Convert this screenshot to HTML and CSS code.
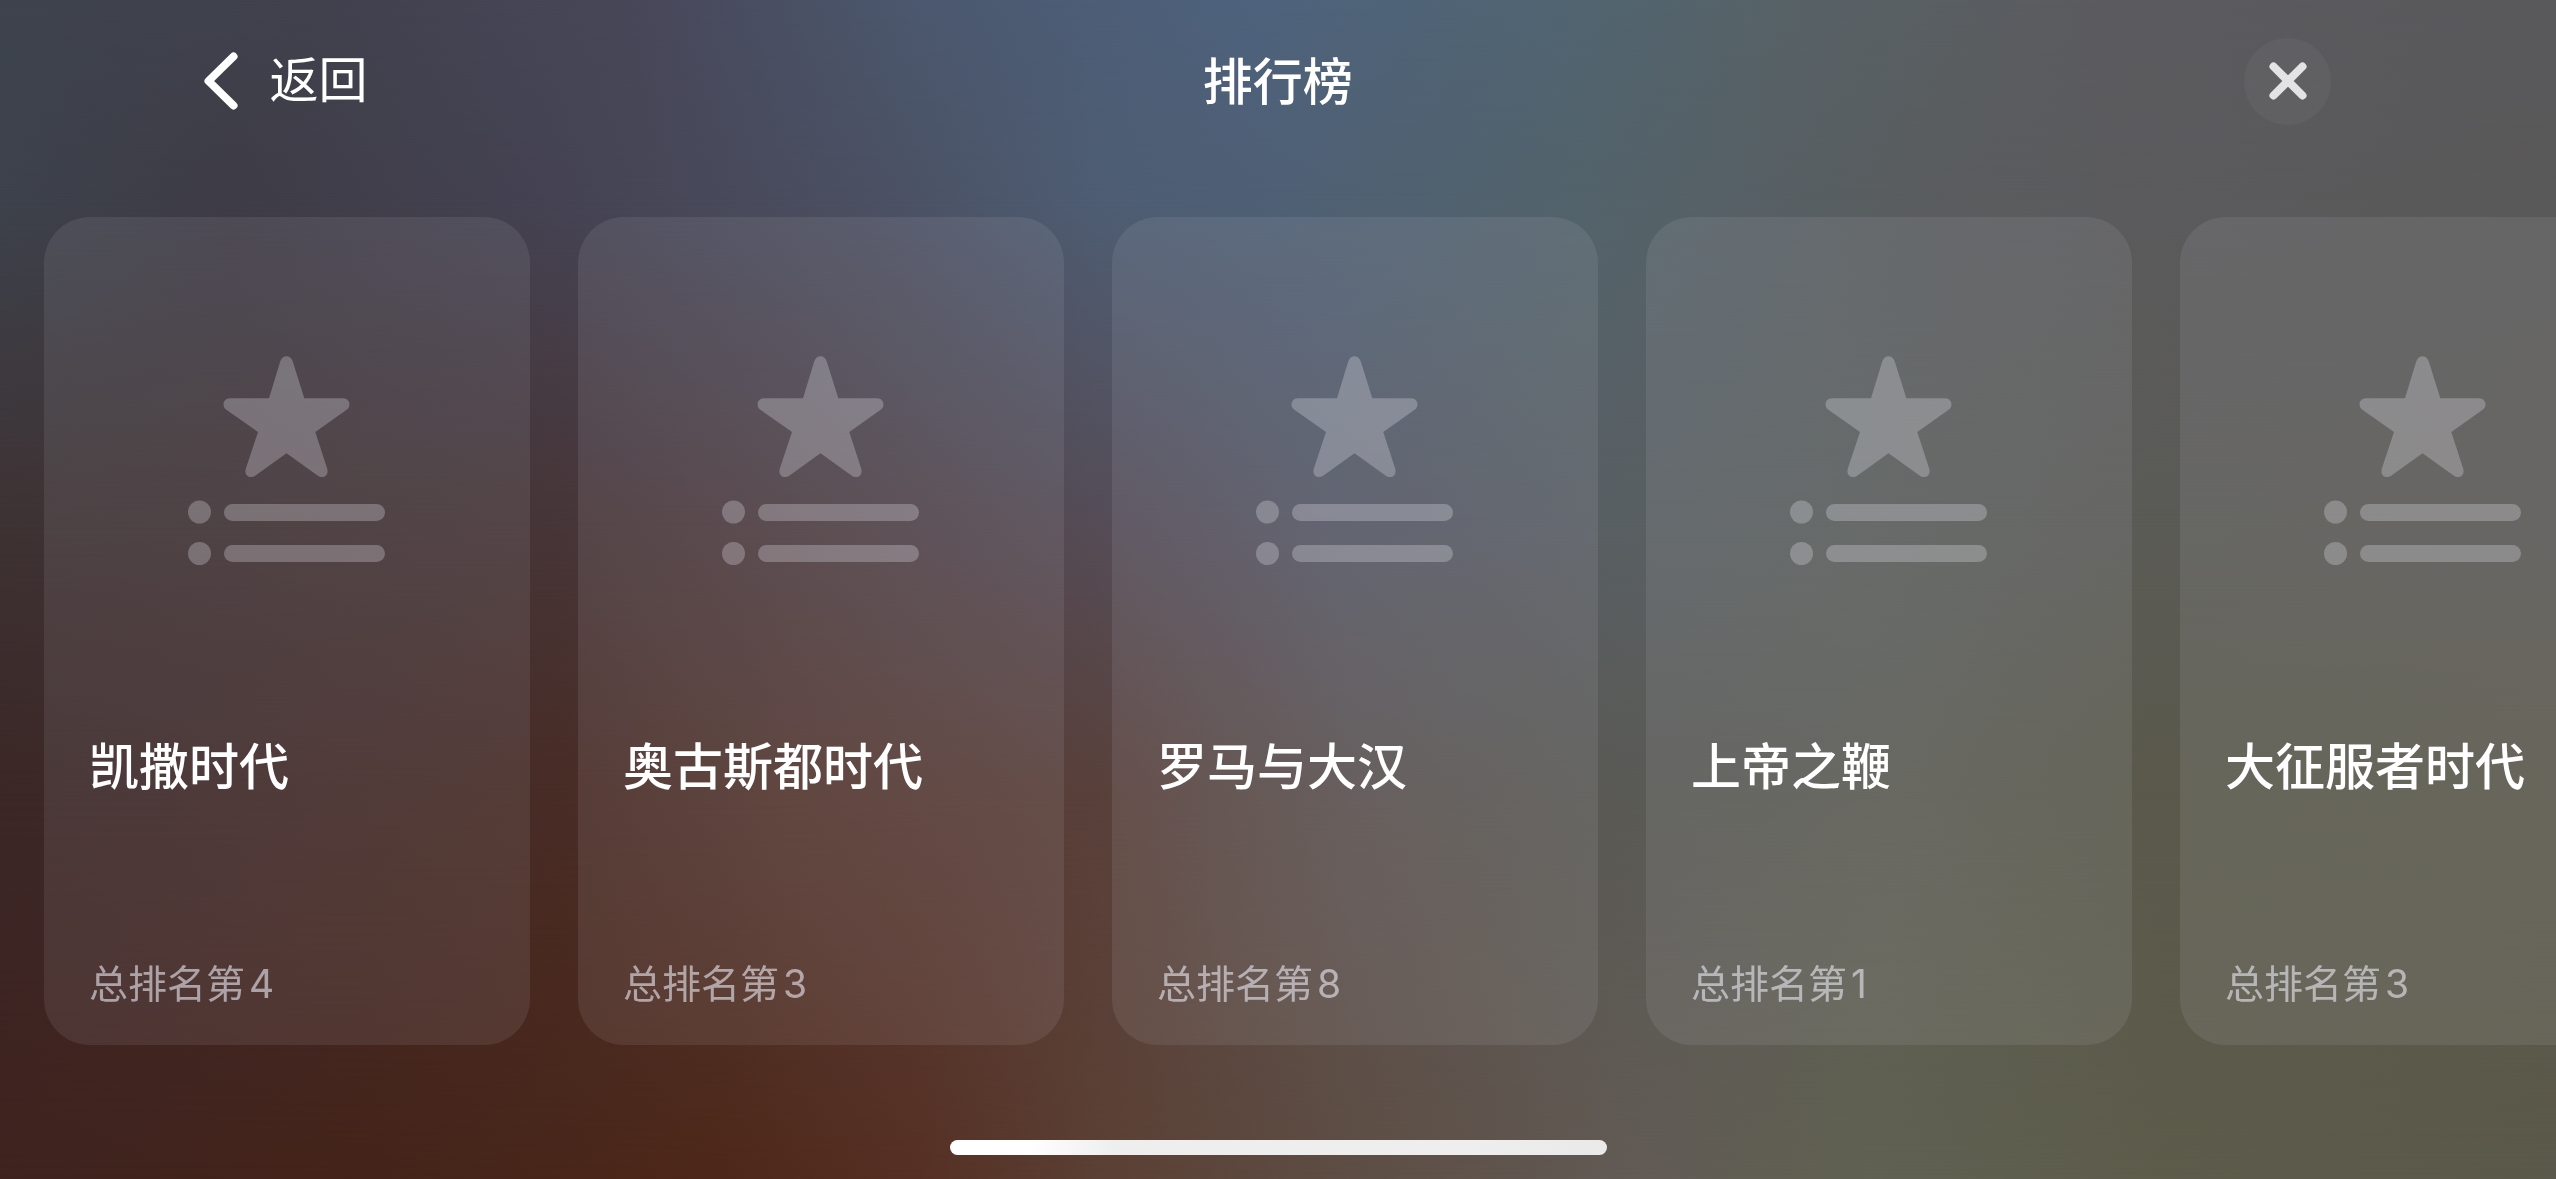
FILE: index.html
```html
<!DOCTYPE html>
<html lang="zh-CN">
<head>
<meta charset="utf-8">
<meta name="viewport" content="width=device-width, initial-scale=1">
<title>排行榜</title>
<link rel="stylesheet" href="styles.css">
</head>
<body>
<div class="backdrop" aria-hidden="true">
  <div class="band band-5"></div>
  <div class="band band-4"></div>
  <div class="band band-3"></div>
  <div class="band band-2"></div>
  <div class="band band-1"></div>
</div>
<svg class="defs" aria-hidden="true">
  <symbol id="star-list" viewBox="0 0 197 209">
    <path d="M92.300 5.300C94.300-1.600 102.700-1.600 104.700 5.300L116.300 42.300H155C161.500 42.300 163.600 49.800 159 53.500L127.300 76L139.300 113C141 119.500 135 123.500 129.500 119.500L98.500 97.300L67.500 119.500C62 123.500 56 119.500 57.700 113L70 76L38 53.500C33.400 49.800 35.500 42.300 42 42.300H81Z"/>
    <circle cx="11.500" cy="156" r="11.500"/>
    <circle cx="11.500" cy="197.500" r="11.500"/>
    <rect x="36" y="148" width="161" height="17" rx="8.500"/>
    <rect x="36" y="189" width="161" height="17" rx="8.500"/>
  </symbol>
</svg>
<header class="bar">
  <button class="back" type="button">
    <svg class="chevron" viewBox="0 0 34 58" aria-hidden="true"><path d="M29.500 4.500L4.500 29L29.500 53.500"/></svg>
    <span>返回</span>
  </button>
  <h1 class="title">排行榜</h1>
  <button class="close" type="button" aria-label="关闭">
    <svg class="cross" viewBox="0 0 38 38" aria-hidden="true"><path d="M4.500 4.500L33.500 33.500M33.500 4.500L4.500 33.500"/></svg>
  </button>
</header>
<main class="boards">
  <article class="card">
    <svg class="emblem" aria-hidden="true"><use href="#star-list"/></svg>
    <h2 class="name">凯撒时代</h2>
    <p class="rank">总排名第<span class="num">4</span></p>
  </article>
  <article class="card">
    <svg class="emblem" aria-hidden="true"><use href="#star-list"/></svg>
    <h2 class="name">奥古斯都时代</h2>
    <p class="rank">总排名第<span class="num">3</span></p>
  </article>
  <article class="card">
    <svg class="emblem" aria-hidden="true"><use href="#star-list"/></svg>
    <h2 class="name">罗马与大汉</h2>
    <p class="rank">总排名第<span class="num">8</span></p>
  </article>
  <article class="card">
    <svg class="emblem" aria-hidden="true"><use href="#star-list"/></svg>
    <h2 class="name">上帝之鞭</h2>
    <p class="rank">总排名第<span class="num">1</span></p>
  </article>
  <article class="card">
    <svg class="emblem" aria-hidden="true"><use href="#star-list"/></svg>
    <h2 class="name">大征服者时代</h2>
    <p class="rank">总排名第<span class="num">3</span></p>
  </article>
</main>
<div class="home-indicator"></div>
</body>
</html>
```
FILE: styles.css
```css
* {
  box-sizing: border-box;
}

body {
  margin: 0;
  min-height: 100vh;
  display: flex;
  flex-direction: column;
  overflow-x: hidden;
  background: #4b4a4c;
  color: #fff;
  font-family: Inter, "Noto Sans CJK SC", sans-serif;
}

/* Soft colour field: each band fades into the one below it */
.backdrop {
  position: fixed;
  inset: 0;
  z-index: -1;
}

.band {
  position: absolute;
  inset: 0;
}

.band-1 {
  background: linear-gradient(90deg, #3e434d 0%, #40414d 12%, #484759 25%, #4b586e 36%, #4e627d 49%, #506471 61%, #576266 70%, #5b5b5f 82%, #59585b 100%);
  mask-image: linear-gradient(#000 0%, transparent 17%);
}

.band-2 {
  background: linear-gradient(90deg, #3d424c 0%, #3e3c46 9%, #454353 22%, #4b5062 34%, #4e5d73 43%, #4f6075 50%, #53636b 62%, #5a5d5f 75%, #5b5a5c 86%, #5a5959 100%);
  mask-image: linear-gradient(#000 17%, transparent 45%);
}

.band-3 {
  background: linear-gradient(90deg, #3e3233 0%, #403334 9%, #473537 22%, #504044 32%, #554c56 43%, #565865 52%, #595f63 63%, #5b5f5d 72%, #5b5b56 84%, #5c5a56 100%);
  mask-image: linear-gradient(#000 45%, transparent 68%);
}

.band-4 {
  background: linear-gradient(90deg, #3b2726 0%, #402928 9%, #482c25 22%, #54372f 31%, #59403a 43%, #5c5350 53%, #5a5a55 64%, #5d5d54 74%, #5a594b 84%, #5c594c 100%);
  mask-image: linear-gradient(#000 68%, transparent 100%);
}

.band-5 {
  background: linear-gradient(90deg, #3f231f 0%, #44241a 14%, #4d281a 28%, #563024 36%, #5b4034 43%, #5e4f46 54%, #625b55 64%, #606152 73%, #5d5c4b 85%, #5b594a 100%);
}

.defs {
  position: absolute;
  width: 0;
  height: 0;
}

button {
  border: 0;
  padding: 0;
  color: inherit;
  font: inherit;
  cursor: pointer;
}

.bar {
  display: grid;
  grid-template-columns: 1fr auto 1fr;
  align-items: center;
  height: 162px;
  padding: 0 8.8% 0 8%;
}

.back {
  justify-self: start;
  display: flex;
  align-items: center;
  gap: 31px;
  background: none;
  font-size: 49px;
  line-height: 60px;
}

.chevron {
  width: 34px;
  height: 58px;
}

.chevron path,
.cross path {
  fill: none;
  stroke: currentColor;
  stroke-linecap: round;
  stroke-linejoin: round;
  stroke-width: 8;
}

.title {
  margin: 2px 0 0 20px;
  font-size: 50px;
  line-height: 60px;
  font-weight: 500;
}

.close {
  justify-self: end;
  display: grid;
  place-items: center;
  width: 87px;
  height: 87px;
  border-radius: 50%;
  background: rgb(255 255 255 / 4%);
  color: #e3e3e3;
}

.cross {
  width: 38px;
  height: 38px;
}

.boards {
  flex: 1;
  display: flex;
  gap: 48px;
  padding: 55px 44px 0;
  overflow: hidden;
}

.card {
  flex: 0 0 486px;
  display: flex;
  flex-direction: column;
  padding: 139px 47px 31px 45px;
  border-radius: 46px;
  background: rgb(235 235 245 / 9%);
}

.emblem {
  align-self: center;
  width: 197px;
  height: 209px;
  fill: rgb(235 235 245 / 28%);
}

.name {
  margin: 172px 0 0;
  font-size: 50px;
  line-height: 60px;
  font-weight: 500;
  white-space: nowrap;
}

.rank {
  margin: auto 0 0;
  font-size: 39px;
  line-height: 60px;
  color: rgb(235 235 245 / 60%);
}

.num {
  margin-left: 4px;
}

.home-indicator {
  align-self: center;
  width: 26%;
  max-width: 657px;
  height: 15px;
  margin: 95px 0 24px;
  border-radius: 8px;
  background: linear-gradient(90deg, #fff 12%, #eee 25%, #eee 80%, #e9e9e9 100%);
}
```
